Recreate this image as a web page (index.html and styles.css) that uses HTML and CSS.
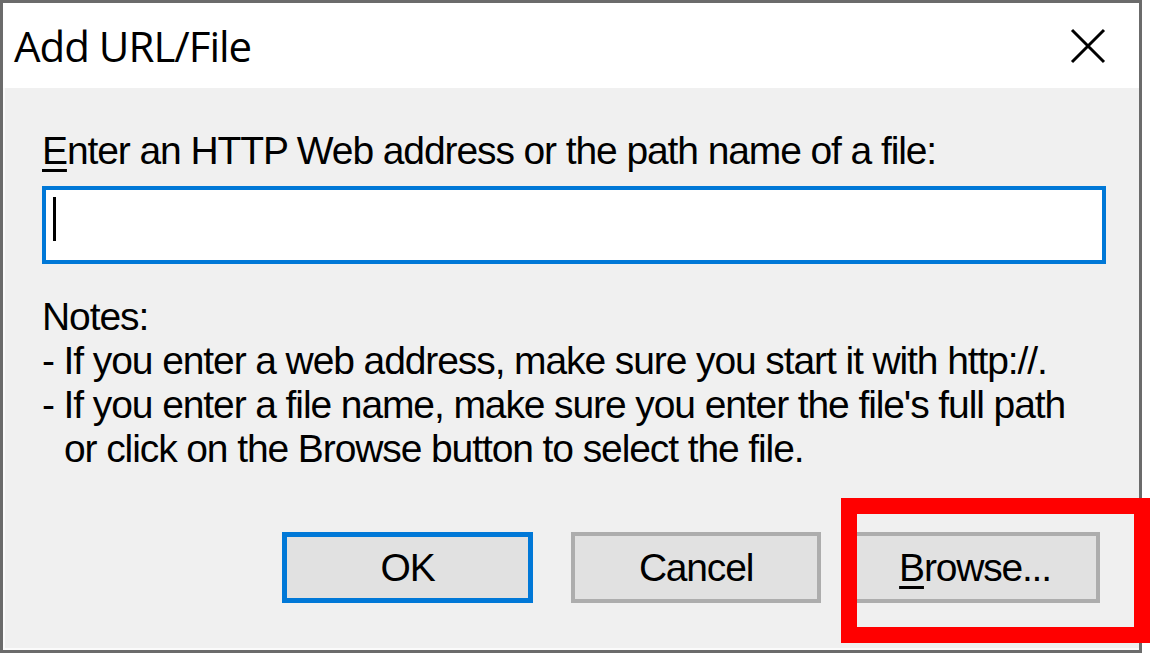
FILE: index.html
```html
<!DOCTYPE html>
<html lang="en">
<head>
<meta charset="utf-8">
<title>Add URL/File</title>
<link rel="stylesheet" href="styles.css">
</head>
<body>
<div class="dialog">
  <div class="titlebar">
    <span class="title">Add URL/File</span>
    <svg class="close" width="36" height="36" viewBox="0 0 36 36" aria-label="Close">
      <path d="M2 2 L34 34 M34 2 L2 34" stroke="#000" stroke-width="3" fill="none"/>
    </svg>
  </div>
  <div class="content">
    <div class="label"><span class="key">E</span>nter an HTTP Web address or the path name of a file:</div>
    <div class="input"><span class="caret"></span></div>
    <div class="notes">
      <div class="line">Notes:</div>
      <div class="line">- If you enter a web address, make sure you start it with http://.</div>
      <div class="line">- If you enter a file name, make sure you enter the file's full path</div>
      <div class="line indent">or click on the Browse button to select the file.</div>
    </div>
    <div class="buttons">
      <div class="btn btn-default">OK</div>
      <div class="btn btn-cancel">Cancel</div>
      <div class="btn btn-browse"><span class="key">B</span>rowse...</div>
    </div>
  </div>
</div>
<div class="highlight"></div>
</body>
</html>
```
FILE: styles.css
```css
html, body {
  margin: 0;
  padding: 0;
  background: #ffffff;
}

body {
  width: 1150px;
  height: 653px;
  overflow: hidden;
  position: relative;
}

.dialog {
  width: 1142px;
  height: 653px;
  box-sizing: border-box;
  border: 3px solid #6b6b6b;
  display: flex;
  flex-direction: column;
  background: #f0f0f0;
}

.titlebar {
  height: 85px;
  flex: 0 0 85px;
  background: #ffffff;
  display: flex;
  align-items: center;
  justify-content: space-between;
  padding: 0 33px 0 11px;
}

.title {
  font-family: "Open Sans", "Noto Sans", sans-serif;
  font-size: 42px;
  color: #000;
  letter-spacing: -1px;
  margin-top: -1px;
}

.close {
  display: block;
}

.content {
  flex: 1;
  background: #f0f0f0;
  border-left: 2px solid #fbfbfb;
  border-bottom: 2px solid #fbfbfb;
  padding: 41px 0 0 37px;
  font-family: "Liberation Sans", Arial, sans-serif;
  font-size: 39px;
  line-height: 44px;
  color: #000;
  letter-spacing: -1.1px;
}

.key {
  text-decoration: underline;
  text-decoration-thickness: 3px;
  text-underline-offset: 5px;
}

.input {
  margin-top: 13px;
  width: 1064px;
  height: 78px;
  box-sizing: border-box;
  border: 4px solid #0078d7;
  background: #ffffff;
  padding: 7px 0 0 7px;
}

.caret {
  display: block;
  width: 3px;
  height: 44px;
  background: #000;
}

.notes {
  margin-top: 31px;
}

.indent {
  padding-left: 22px;
}

.buttons {
  margin-top: 61px;
  display: flex;
  padding-left: 240px;
}

.btn {
  width: 250px;
  height: 71px;
  box-sizing: border-box;
  background: #e1e1e1;
  border: 4px solid #adadad;
  display: flex;
  align-items: center;
  justify-content: center;
  letter-spacing: -1.2px;
}

.btn-default {
  border: 5px solid #0078d7;
  width: 251px;
}

.btn-cancel {
  margin-left: 38px;
}

.btn-browse {
  margin-left: 29px;
}

.highlight {
  position: absolute;
  left: 841px;
  top: 498px;
  width: 309px;
  height: 145px;
  box-sizing: border-box;
  border: 16px solid #ff0000;
}
```
